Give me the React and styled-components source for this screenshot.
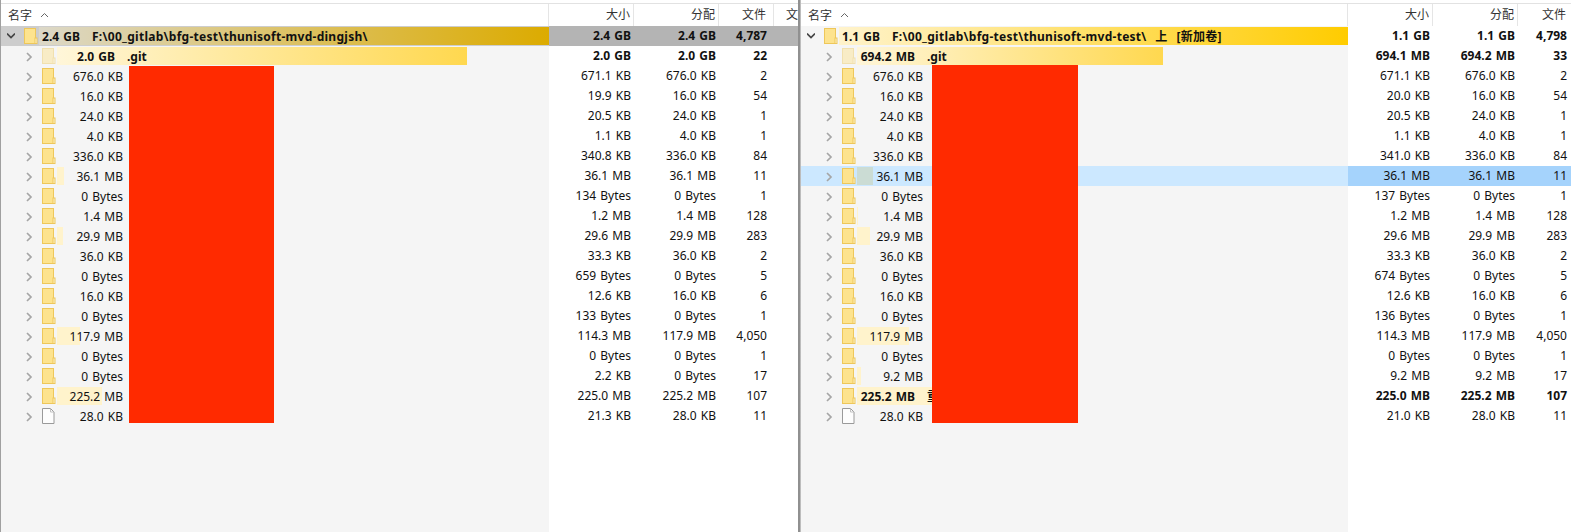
import React from 'react';
import styled, { createGlobalStyle } from 'styled-components';

const GlobalStyle = createGlobalStyle`
  html, body { margin: 0; padding: 0; background: #fff; }
  body {
    font-family: "Noto Sans", "Noto Sans CJK SC", sans-serif;
    font-size: 12px;
    word-spacing: 1px;
    color: #111;
  }
`;

const leftRows = [
  { size: '2.0 GB', bold: true, name: '.git', fill: 410, dim: true, real: '2.0 GB', alloc: '2.0 GB', files: '22' },
  { size: '676.0 KB', real: '671.1 KB', alloc: '676.0 KB', files: '2' },
  { size: '16.0 KB', real: '19.9 KB', alloc: '16.0 KB', files: '54' },
  { size: '24.0 KB', real: '20.5 KB', alloc: '24.0 KB', files: '1' },
  { size: '4.0 KB', real: '1.1 KB', alloc: '4.0 KB', files: '1' },
  { size: '336.0 KB', real: '340.8 KB', alloc: '336.0 KB', files: '84' },
  { size: '36.1 MB', fill: 7, real: '36.1 MB', alloc: '36.1 MB', files: '11' },
  { size: '0 Bytes', real: '134 Bytes', alloc: '0 Bytes', files: '1' },
  { size: '1.4 MB', real: '1.2 MB', alloc: '1.4 MB', files: '128' },
  { size: '29.9 MB', fill: 6, real: '29.6 MB', alloc: '29.9 MB', files: '283' },
  { size: '36.0 KB', real: '33.3 KB', alloc: '36.0 KB', files: '2' },
  { size: '0 Bytes', real: '659 Bytes', alloc: '0 Bytes', files: '5' },
  { size: '16.0 KB', real: '12.6 KB', alloc: '16.0 KB', files: '6' },
  { size: '0 Bytes', real: '133 Bytes', alloc: '0 Bytes', files: '1' },
  { size: '117.9 MB', fill: 23, real: '114.3 MB', alloc: '117.9 MB', files: '4,050' },
  { size: '0 Bytes', real: '0 Bytes', alloc: '0 Bytes', files: '1' },
  { size: '0 Bytes', real: '2.2 KB', alloc: '0 Bytes', files: '17' },
  { size: '225.2 MB', fill: 45, real: '225.0 MB', alloc: '225.2 MB', files: '107' },
  { size: '28.0 KB', file: true, real: '21.3 KB', alloc: '28.0 KB', files: '11' },
];

const rightRows = [
  { size: '694.2 MB', bold: true, name: '.git', fill: 306, dim: true, real: '694.1 MB', alloc: '694.2 MB', files: '33' },
  { size: '676.0 KB', real: '671.1 KB', alloc: '676.0 KB', files: '2' },
  { size: '16.0 KB', real: '20.0 KB', alloc: '16.0 KB', files: '54' },
  { size: '24.0 KB', real: '20.5 KB', alloc: '24.0 KB', files: '1' },
  { size: '4.0 KB', real: '1.1 KB', alloc: '4.0 KB', files: '1' },
  { size: '336.0 KB', real: '341.0 KB', alloc: '336.0 KB', files: '84' },
  { size: '36.1 MB', fill: 16, active: true, real: '36.1 MB', alloc: '36.1 MB', files: '11' },
  { size: '0 Bytes', real: '137 Bytes', alloc: '0 Bytes', files: '1' },
  { size: '1.4 MB', fill: 1, real: '1.2 MB', alloc: '1.4 MB', files: '128' },
  { size: '29.9 MB', fill: 13, real: '29.6 MB', alloc: '29.9 MB', files: '283' },
  { size: '36.0 KB', real: '33.3 KB', alloc: '36.0 KB', files: '2' },
  { size: '0 Bytes', real: '674 Bytes', alloc: '0 Bytes', files: '5' },
  { size: '16.0 KB', real: '12.6 KB', alloc: '16.0 KB', files: '6' },
  { size: '0 Bytes', real: '136 Bytes', alloc: '0 Bytes', files: '1' },
  { size: '117.9 MB', fill: 52, real: '114.3 MB', alloc: '117.9 MB', files: '4,050' },
  { size: '0 Bytes', real: '0 Bytes', alloc: '0 Bytes', files: '1' },
  { size: '9.2 MB', fill: 4, real: '9.2 MB', alloc: '9.2 MB', files: '17' },
  { size: '225.2 MB', bold: true, name: '重', fill: 75, real: '225.0 MB', alloc: '225.2 MB', files: '107' },
  { size: '28.0 KB', file: true, real: '21.0 KB', alloc: '28.0 KB', files: '11' },
];

const Page = styled.div`
  display: flex;
  width: 1571px;
  height: 532px;
  overflow: hidden;
  background: #fff;
`;

const Pane = styled.section`
  position: relative;
  flex: none;
  display: flex;
  flex-direction: column;
  box-sizing: border-box;
  width: ${(p) => p.$width}px;
  height: 532px;
  padding-top: 3px;
  overflow: hidden;
  border-left: ${(p) => (p.$first ? '1px solid #a0a0a0' : 'none')};
`;

const Splitter = styled.div`
  flex: none;
  width: 3px;
  background: linear-gradient(90deg, #909090 0, #909090 66%, #e8e8e8 100%);
`;

const HeadRow = styled.div`
  flex: none;
  display: flex;
  box-sizing: border-box;
  height: 23px;
  border-top: 1px solid #e2e2e2;
`;

const Line = styled.div`
  flex: none;
  display: flex;
  height: 20px;
  font-weight: ${(p) => (p.$bold ? 700 : 400)};
`;

const NameCell = styled.div`
  flex: none;
  display: flex;
  align-items: center;
  box-sizing: border-box;
  width: ${(p) => p.$width}px;
  padding-left: ${(p) => p.$indent}px;
  background: ${(p) => (p.$active ? '#cce8ff' : p.$grey ? '#cdcdcd' : '#f5f5f5')};
`;

const NumCell = styled.div`
  flex: none;
  box-sizing: border-box;
  width: ${(p) => p.$width}px;
  padding-right: ${(p) => p.$pad}px;
  line-height: 20px;
  text-align: right;
  white-space: nowrap;
  background: ${(p) => p.$bg || 'transparent'};
`;

const BlankGutter = styled.div`
  flex: 1;
  width: ${(p) => p.$width}px;
  background: #f5f5f5;
`;

const HeadName = styled.div`
  flex: none;
  display: flex;
  align-items: center;
  gap: 8px;
  box-sizing: border-box;
  width: ${(p) => p.$width}px;
  padding-left: 7px;
  border-right: 1px solid #e5e5e5;
  color: #333;
`;

const HeadCell = styled.div`
  flex: none;
  box-sizing: border-box;
  width: ${(p) => p.$width}px;
  padding-right: ${(p) => p.$pad}px;
  line-height: 22px;
  text-align: right;
  white-space: nowrap;
  color: #333;
  border-right: 1px solid #e5e5e5;
`;

const HeadClipped = styled.div`
  flex: none;
  padding-left: 12px;
  line-height: 22px;
  color: #333;
`;

const Arrow = styled.svg`
  flex: none;
  width: 8px;
  height: 10px;
  margin: 2px 9px 0 0;
`;

const IconSlot = styled.svg`
  flex: none;
  width: 14px;
  height: 16px;
  margin-right: 1px;
  opacity: ${(p) => (p.$dim ? 0.45 : 1)};
`;

const SizeBox = styled.div`
  position: relative;
  flex: ${(p) => (p.$root ? 1 : 'none')};
  display: flex;
  align-items: center;
  height: 18px;
  min-width: 0;
  white-space: pre;
`;

const Bar = styled.div`
  position: absolute;
  left: 0;
  top: 0;
  bottom: 0;
  background: ${(p) => p.$bg};
`;

const SizeText = styled.span`
  position: relative;
  display: block;
  box-sizing: border-box;
  width: ${(p) => p.$width}px;
  padding-right: ${(p) => (p.$bold ? 8 : 0)}px;
  text-align: right;
`;

const NameText = styled.span`
  position: relative;
  margin-left: ${(p) => p.$gap}px;
`;

const PathText = styled(NameText)`
  letter-spacing: 0.27px;
`;

const Redaction = styled.div`
  position: absolute;
  left: ${(p) => p.$left}px;
  top: ${(p) => p.$top}px;
  width: ${(p) => p.$width}px;
  height: ${(p) => p.$height}px;
  background: #ff2a00;
`;

const Chevron = ({ open }) => (
  <Arrow viewBox="0 0 8 10">
    <path
      d={open ? 'M0 1.5l4 4 4-4' : 'M2 1l4 4-4 4'}
      fill="none"
      stroke={open ? '#444' : '#a6a6a6'}
      strokeWidth="1.7"
    />
  </Arrow>
);

const FolderIcon = ({ dim }) => (
  <IconSlot viewBox="0 0 14 16" $dim={dim}>
    <rect x="0.5" y="0.5" width="11" height="15" fill="#fde38e" stroke="#eec75a" />
    <rect x="11" y="10" width="2" height="5.5" fill="#fff3c9" stroke="#eec75a" />
  </IconSlot>
);

const FileIcon = () => (
  <IconSlot viewBox="0 0 14 16">
    <path d="M0.5 0.5h8l3.5 3.5v11.5h-11.5z" fill="#fdfdfd" stroke="#9a9a9a" />
    <path d="M8.5 0.5v3.5h3.5" fill="none" stroke="#c0c0c0" />
  </IconSlot>
);

const SortCaret = () => (
  <svg width="9" height="6" viewBox="0 0 9 6">
    <path d="M1 5l3.5-3.5L8 5" fill="none" stroke="#666" />
  </svg>
);

const fillFor = (row) => {
  if (row.active) return '#cbdcd4';
  if (row.name === '.git') return 'linear-gradient(90deg, #fff6d9 0%, #ffd84f 100%)';
  return '#fff3cc';
};

function Row({ row, layout }) {
  const numBg = row.active ? '#a5d3fc' : undefined;
  return (
    <Line $bold={row.bold}>
      <NameCell $width={layout.name} $indent={layout.rowIndent} $active={row.active}>
        <Chevron />
        {row.file ? <FileIcon /> : <FolderIcon dim={row.dim} />}
        <SizeBox>
          {row.fill ? <Bar $bg={fillFor(row)} style={{ width: row.fill }} /> : null}
          <SizeText $width={66} $bold={row.bold}>{row.size}</SizeText>
          {row.name ? <NameText $gap={4}>{row.name}</NameText> : null}
        </SizeBox>
      </NameCell>
      <NumCell $width={layout.real} $pad={layout.realPad} $bg={numBg}>{row.real}</NumCell>
      <NumCell $width={layout.alloc} $pad={layout.allocPad} $bg={numBg}>{row.alloc}</NumCell>
      <NumCell $width={layout.files} $pad={layout.filesPad} $bg={numBg}>{row.files}</NumCell>
    </Line>
  );
}

function TreePane({ first, width, layout, root, rows, redaction }) {
  const rootBg = root.grey ? '#b4b4b4' : undefined;
  return (
    <Pane $first={first} $width={width}>
      <HeadRow>
        <HeadName $width={layout.name}>名字 <SortCaret /></HeadName>
        <HeadCell $width={layout.real} $pad={layout.realPad}>大小</HeadCell>
        <HeadCell $width={layout.alloc} $pad={layout.allocPad}>分配</HeadCell>
        <HeadCell $width={layout.files} $pad={layout.filesPad}>文件</HeadCell>
        {first ? <HeadClipped>文</HeadClipped> : null}
      </HeadRow>
      <Line $bold>
        <NameCell $width={layout.name} $indent={layout.rootIndent} $grey={root.grey}>
          <Chevron open />
          <FolderIcon />
          <SizeBox $root>
            <Bar $bg={root.bar} style={{ width: '100%' }} />
            <SizeText $width={layout.rootSize}>{root.size}</SizeText>
            <PathText $gap={12}>{root.path}</PathText>
          </SizeBox>
        </NameCell>
        <NumCell $width={layout.real} $pad={layout.realPad} $bg={rootBg}>{root.size}</NumCell>
        <NumCell $width={layout.alloc} $pad={layout.allocPad} $bg={rootBg}>{root.size}</NumCell>
        <NumCell $width={layout.files} $pad={layout.filesPad} $bg={rootBg}>{root.files}</NumCell>
        {first ? <NumCell $width={40} $pad={0} $bg={rootBg} /> : null}
      </Line>
      {rows.map((row, i) => (
        <Row key={i} row={row} layout={layout} />
      ))}
      <BlankGutter $width={layout.name} />
      <Redaction {...redaction} />
    </Pane>
  );
}

const leftLayout = { name: 548, rootIndent: 6, rowIndent: 24, real: 85, realPad: 3, alloc: 85, allocPad: 3, files: 55, filesPad: 7, rootSize: 41 };
const rightLayout = { name: 547, rootIndent: 6, rowIndent: 24, real: 85, realPad: 3, alloc: 85, allocPad: 3, files: 55, filesPad: 6, rootSize: 41 };

export default function App() {
  return (
    <Page>
      <GlobalStyle />
      <TreePane
        first
        width={798}
        layout={leftLayout}
        rows={leftRows}
        root={{
          grey: true,
          size: '2.4 GB',
          files: '4,787',
          path: 'F:\\00_gitlab\\bfg-test\\thunisoft-mvd-dingjsh\\',
          bar: 'linear-gradient(90deg, #dcd8c8 0%, #dcab00 100%)',
        }}
        redaction={{ $left: 128, $top: 66, $width: 145, $height: 357 }}
      />
      <Splitter />
      <TreePane
        width={770}
        layout={rightLayout}
        rows={rightRows}
        root={{
          size: '1.1 GB',
          files: '4,798',
          path: 'F:\\00_gitlab\\bfg-test\\thunisoft-mvd-test\\  上  [新加卷]',
          bar: 'linear-gradient(90deg, #fff3cc 0%, #ffcc00 100%)',
        }}
        redaction={{ $left: 131, $top: 65, $width: 146, $height: 358 }}
      />
    </Page>
  );
}
